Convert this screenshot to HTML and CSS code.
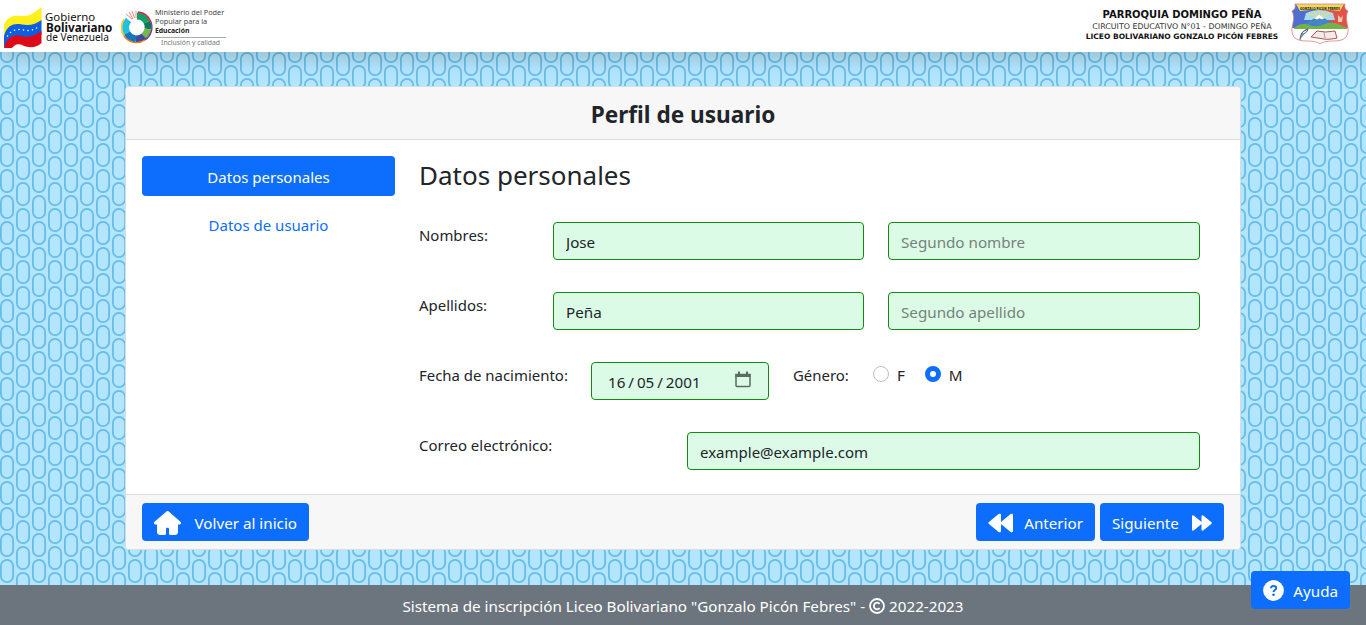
FILE: index.html
```html
<!DOCTYPE html>
<html lang="es">
<head>
<meta charset="utf-8">
<title>Perfil de usuario</title>
<link rel="stylesheet" href="styles.css">
</head>
<body>
<header class="topbar">
  <div class="brand">
    <svg class="flag" width="38" height="42" viewBox="0 0 38 42">
      <path d="M0 18C3 9 10 8 18 9S32 4 37.500 0V18L0 32Z" fill="#fff01c"/>
      <path d="M0 29C3 18 10 16 18 17.500S32 17 37.500 13V28L0 40Z" fill="#0d5fe0"/>
      <path d="M0 41C3 29 11 27 18 29S32 28 37.500 24V36C32 41 25 41 19 38.500S11 38 8 41Z" fill="#df0a18"/>
      <g fill="#fff"><circle cx="3.500" cy="29" r=".8"/><circle cx="6.500" cy="25.500" r=".8"/><circle cx="10.500" cy="23.200" r=".8"/><circle cx="15" cy="22.500" r=".8"/><circle cx="19.500" cy="23" r=".8"/><circle cx="24" cy="23.500" r=".8"/><circle cx="28.500" cy="22.800" r=".8"/><circle cx="32.500" cy="21" r=".8"/></g>
    </svg>
    <div class="gov"><span>Gobierno</span><b>Bolivariano</b><span class="country">de Venezuela</span></div>
    <svg class="wheel" width="32" height="34" viewBox="0 0 32 34">
      <g fill="none" stroke-width="7">
        <path d="M16 6A11.500 11.500 0 0 1 26 12" stroke="#12a06a"/>
        <path d="M26 12A11.500 11.500 0 0 1 27 19" stroke="#0f7a58"/>
        <path d="M27 19A11.500 11.500 0 0 1 23 26" stroke="#74b84a"/>
        <path d="M23 26A11.500 11.500 0 0 1 15 29" stroke="#3a4f9a"/>
        <path d="M15 29A11.500 11.500 0 0 1 6 23" stroke="#1876bd"/>
        <path d="M6 23A11.500 11.500 0 0 1 7.500 10" stroke="#22bfe0"/>
      </g>
      <g fill="none" stroke-width="1.400"><path d="M17 2A15.200 15.200 0 0 1 30 12" stroke="#e0203a"/><path d="M30 12A15.200 15.200 0 0 1 24 30" stroke="#7a3f98"/><path d="M24 30A15.200 15.200 0 0 1 3 26" stroke="#f47b20"/><path d="M3 26A15.200 15.200 0 0 1 3 9.500" stroke="#fcc419"/></g>
      <path d="M3 3L16 1 16 9 10 11Z" fill="#fff"/>
      <path d="M5 4l6 5M8 2l4 7M11 1l2.500 7M15 1v7" stroke="#ee6a58" fill="none" stroke-width=".8"/>
    </svg>
    <div class="ministry"><span>Ministerio del Poder</span><span>Popular para la</span><b>Educación</b><em>Inclusión y calidad</em></div>
  </div>
  <div class="school">
    <div class="school-text"><b class="parish">PARROQUIA DOMINGO PEÑA</b><span class="circuit">CIRCUITO EDUCATIVO N°01 - DOMINGO PEÑA</span><b class="liceo">LICEO BOLIVARIANO GONZALO PICÓN FEBRES</b></div>
    <svg class="crest" width="58" height="42" viewBox="0 0 58 42">
      <defs><clipPath id="shield"><path d="M4 1H54C53 5 55 7 57 8C54 14 56 19 57 25C58 34 53 38 43 38C36 38 31 39 29 41C27 39 22 38 15 38C5 38 0 34 1 25C2 19 4 14 1 8C3 7 5 5 4 1Z"/></clipPath></defs>
      <g clip-path="url(#shield)">
        <path d="M0 0H58V42H0Z" fill="#fff"/><path d="M0 0H29V25H0Z" fill="#4f6fd0"/><path d="M29 0H58V25H29Z" fill="#e35048"/>
        <path d="M15 10Q28 4 42 10L44 17H13Z" fill="#a9dbef"/>
        <path d="M28 17L18 10M28 17L23 8M28 17V7M28 17L34 8M28 17L39 10" stroke="#f2dc60" stroke-width="1.200"/>
        <path d="M6 24L19 18 28 12 38 18 52 24Z" fill="#4286c8"/><path d="M23 15.500l5-4 5.500 4-3 .8-2-1-2 1.200Z" fill="#fff"/>
        <path d="M3 25Q10 19 18 22T34 21T56 25V26H3Z" fill="#74b247"/>
        <path d="M5 1H53L49 8Q29 5 9 8Z" fill="#f3d95a"/>
        <path d="M47 12l3 3 2-3-1 7h-4Z" fill="#f5c8b0"/>
        <path d="M20 34l6-6q8 2 18 0l2 7q-9 2-13 1Z" fill="#f4eaea" stroke="#a65757"/><path d="M33 29l1 6" stroke="#c88c8c"/>
        <path d="M17 26Q9 28 9 37M10 31q2-3 7-5-1 5-7 5Z" stroke="#56667a" fill="#8996a6"/>
      </g>
      <path d="M4 1H54C53 5 55 7 57 8C54 14 56 19 57 25C58 34 53 38 43 38C36 38 31 39 29 41C27 39 22 38 15 38C5 38 0 34 1 25C2 19 4 14 1 8C3 7 5 5 4 1Z" fill="none" stroke="#d67f83" stroke-width=".8"/>
      <text x="9" y="6.800" textLength="40" lengthAdjust="spacingAndGlyphs" class="crest-text">GONZALO PICÓN FEBRES</text>
    </svg>
  </div>
</header>
<main class="page">
  <form class="card">
    <h1 class="card-header">Perfil de usuario</h1>
    <div class="card-body">
      <nav class="tabs"><a class="tab active">Datos personales</a><a class="tab">Datos de usuario</a></nav>
      <section class="fields">
        <h2 class="section-title">Datos personales</h2>
        <div class="row names"><label>Nombres:</label><input class="input" value="Jose"><input class="input" placeholder="Segundo nombre"></div>
        <div class="row names"><label>Apellidos:</label><input class="input" value="Peña"><input class="input" placeholder="Segundo apellido"></div>
        <div class="row birth"><label>Fecha de nacimiento:</label>
          <div class="input date"><span>16 / 05 / 2001</span><svg width="16" height="17" viewBox="0 0 16 17"><path d="M1 3.500h14v11q0 1-1 1H2q-1 0-1-1Z" fill="none" stroke="#5c6b62" stroke-width="1.500"/><path d="M.5 3h15v3H.5ZM3 .5h2V3H3ZM11 .5h2V3h-2Z" fill="#5c6b62"/></svg></div>
          <label class="gender">Género:</label>
          <span class="option"><i class="radio"></i>F</span><span class="option"><i class="radio checked"></i>M</span>
        </div>
        <div class="row mail"><label>Correo electrónico:</label><input class="input" value="example@example.com"></div>
      </section>
    </div>
    <div class="card-footer">
      <button type="button" class="btn home"><svg width="27" height="24" viewBox="0 0 576 512"><path fill="#fff" d="M575.800 255.500c0 18-15 32.100-32 32.100h-32l.7 160.200c0 35-28 64.200-64 64.200H352c-18 0-32-14-32-32V384c0-18-10-28-24-28h-16c-14 0-24 10-24 28v96c0 18-14 32-32 32h-96c-36 0-64-29-64-64V287.600H32c-18 0-32-14-32-32.100 0-9 3-17 10-24L266.400 8c7-7 15-8 22-8s15 2 21 7l255.400 224.500c8 7 12 15 11 24z"/></svg><span>Volver al inicio</span></button>
      <div class="pager">
        <button type="button" class="btn prev"><svg width="25" height="20" viewBox="0 0 25 20"><path fill="#fff" d="M.7 9.200 10.600 1Q13 0 13 2V18Q13 20 10.600 19L.7 10.800Q0 10 .7 9.200ZM12.700 9.200 22.600 1Q25 0 25 2V18Q25 20 22.600 19L12.700 10.800Z"/></svg><span>Anterior</span></button>
        <button type="button" class="btn next"><span>Siguiente</span><svg width="20" height="16" viewBox="0 0 20 16"><path fill="#fff" d="M0 1.500Q0-.5 2 .7L9.500 7V1.500Q9.500-.5 11.500.7L19.500 7.300Q20.300 8 19.500 8.700L11.500 15.300Q9.500 16.500 9.500 14.500V9L2 15.300Q0 16.500 0 14.500Z"/></svg></button>
      </div>
    </div>
  </form>
</main>
<footer class="footer"><span>Sistema de inscripción Liceo Bolivariano "Gonzalo Picón Febres" -</span><svg width="16" height="16" viewBox="0 0 16 16" fill="none" stroke="#fff" stroke-width="1.800"><circle cx="8" cy="8" r="7"/><path d="M10.600 5.800A3.300 3.300 0 1 0 10.600 10.200"/></svg><span>2022-2023</span></footer>
<button type="button" class="btn help"><svg width="21" height="21" viewBox="0 0 21 21"><circle cx="10.500" cy="10.500" r="10.400" fill="#fff"/><path d="M7.900 8.200C8 6.500 9 6 10.500 6S13.200 6.800 13.200 8.300C13.200 10 10.500 10 10.500 12" fill="none" stroke="#0d6efd" stroke-width="1.900"/><circle cx="10.500" cy="14.700" r="1.300" fill="#0d6efd"/></svg><span>Ayuda</span></button>
</body>
</html>
```
FILE: styles.css
```css
* { box-sizing: border-box; }
body {
  margin: 0; height: 625px; overflow: hidden; display: flex; flex-direction: column;
  font: 15.2px/24px "Noto Sans", "Open Sans", sans-serif; color: #212529;
  background: #b3e5fc url("data:image/svg+xml,%3Csvg xmlns='http://www.w3.org/2000/svg' width='32' height='26' viewBox='0 0 32 26'%3E%3Cg fill='none' stroke='%2366bde9' stroke-width='1.8'%3E%3Crect x='.9' y='-12.1' width='12.2' height='22.2' rx='6.1'/%3E%3Crect x='.9' y='13.9' width='12.2' height='22.2' rx='6.1'/%3E%3Crect x='16.9' y='.9' width='12.2' height='22.2' rx='6.1'/%3E%3C/g%3E%3C/svg%3E");
}
.topbar { position: relative; height: 52px; flex: none; display: flex; justify-content: space-between; background: #fff; box-shadow: 0 8px 16px rgba(0,0,0,.15); }
.brand, .school { display: flex; align-items: flex-start; }
.flag { margin: 7px 3px 0 4px; }
.gov { width: 76px; padding-top: 12px; display: flex; flex-direction: column; font: 11.400px/10px "Noto Sans", sans-serif; color: #111; white-space: nowrap; }
.gov b { font-size: 11.700px; padding-left: 1px; }
.country { font-size: 10.100px; padding-left: 1px; }
.wheel { margin-top: 10px; }
.ministry { width: 71px; margin-left: 2px; padding-top: 8px; display: flex; flex-direction: column; font: 7.300px/9.200px "Noto Sans", sans-serif; color: #444; white-space: nowrap; }
.ministry b { font-size: 6.800px; color: #222; }
.ministry em { margin-top: 1px; border-top: 1px solid #aaa; font-size: 6.800px; font-style: normal; text-align: center; color: #777; }
.school-text { width: 194px; margin-right: 12px; padding-top: 9px; display: flex; flex-direction: column; align-items: center; font: 7.900px/11px "DejaVu Sans", sans-serif; white-space: nowrap; color: #111; }
.parish { font-size: 10px; line-height: 12px; }
.circuit { color: #333; }
.liceo { font-size: 7.500px; line-height: 10px; }
.crest { margin: 3px 17px 0 0; }
.crest-text { font: bold 4px "DejaVu Sans", sans-serif; fill: #222; }
.page { flex: 1; padding: 34px 125px 0; }
.card { height: 464px; display: flex; flex-direction: column; background: #fff; border: 1px solid #d8dde0; border-radius: 4px; overflow: hidden; }
.card-header { flex: none; height: 53px; margin: 0; padding-top: 13px; background: #f7f7f7; border-bottom: 1px solid #dcdcdc; text-align: center; font-size: 22.600px; line-height: 30px; }
.card-body { flex: 1; min-height: 0; padding: 16px 40px 0 16px; display: flex; gap: 24px; }
.tabs { width: 253px; display: flex; flex-direction: column; gap: 8px; text-align: center; font-size: 15px; }
.tab { height: 40px; padding-top: 9px; border-radius: 4px; color: #0d6efd; }
.active { background: #0d6efd; color: #fff; }
.fields { flex: 1; }
.section-title { margin: 3px 0 30px; font-size: 26px; line-height: 33px; font-weight: 400; }
.row { height: 38px; margin-bottom: 32px; display: flex; }
.row label { font-size: 14.950px; line-height: 26px; white-space: nowrap; }
.names { display: grid; grid-template-columns: 110px 311px 312px; column-gap: 24px; }
.input { width: 100%; min-width: 0; height: 38px; padding: 2px 12px 0; border: 1px solid #128a12; border-radius: 4px; background: #dcfbe7; color: #212529; font: inherit; }
.mail .input { font-size: 15px; }
.input::placeholder { color: #75827c; opacity: 1; }
.birth label:first-child { width: 172px; }
.date { width: 178px; padding: 2px 17px 0 16px; display: flex; align-items: center; justify-content: space-between; word-spacing: -1px; }
.date svg { margin-top: -5px; }
.gender { margin: 0 24px; }
.option { display: flex; gap: 8px; margin-right: 20px; line-height: 26px; }
.radio { width: 16px; height: 16px; margin-top: 4px; border: 1px solid #bfbfbf; border-radius: 50%; background: #fff; }
.radio.checked { border: 5px solid #0d6efd; }
.mail label { flex: 0 0 268px; }
.card-footer { flex: none; height: 55px; padding: 8px 16px; display: flex; justify-content: space-between; background: #f7f7f7; border-top: 1px solid #dcdcdc; }
.pager { display: flex; gap: 5px; }
.btn { height: 38px; padding: 0 12px; display: flex; align-items: center; justify-content: space-between; border: 0; border-radius: 4px; background: #0d6efd; color: #fff; font: inherit; white-space: nowrap; }
.btn span { padding-top: 1px; }
.btn svg { margin-top: 1px; }
.home { width: 167px; }
.prev { width: 119px; }
.next { width: 124px; }
.footer { flex: none; height: 40px; padding-top: 2px; display: flex; align-items: center; justify-content: center; gap: 4px; background: #6c757d; color: #fff; }
.help { position: absolute; left: 1251px; top: 571px; width: 99px; }
```
